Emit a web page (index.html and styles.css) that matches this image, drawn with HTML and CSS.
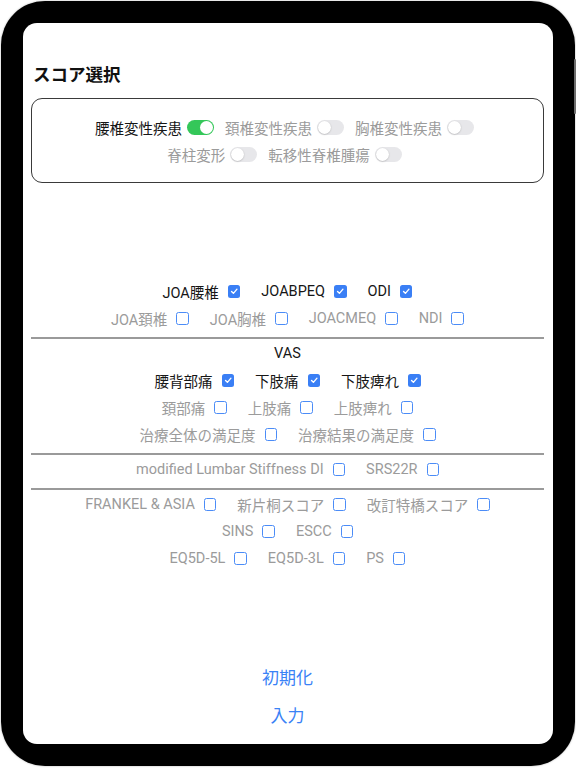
FILE: index.html
```html
<!DOCTYPE html>
<html lang="ja">
<head>
<meta charset="utf-8">
<title>スコア選択</title>
<link rel="stylesheet" href="styles.css">
</head>
<body>
<div class="device">
  <div class="side-button"></div>
  <div class="screen">
    <h1 class="title">スコア選択</h1>
    <div class="disease-box">
      <div class="row">
        <div class="item on"><span class="label">腰椎変性疾患</span><span class="toggle on"><span class="knob"></span></span></div>
        <div class="item off"><span class="label">頚椎変性疾患</span><span class="toggle"><span class="knob"></span></span></div>
        <div class="item off"><span class="label">胸椎変性疾患</span><span class="toggle"><span class="knob"></span></span></div>
      </div>
      <div class="row">
        <div class="item off"><span class="label">脊柱変形</span><span class="toggle"><span class="knob"></span></span></div>
        <div class="item off"><span class="label">転移性脊椎腫瘍</span><span class="toggle"><span class="knob"></span></span></div>
      </div>
    </div>

    <div class="scores">
      <div class="row cb-row">
        <div class="item on"><span class="label">JOA腰椎</span><span class="cb checked"><svg viewBox="0 0 12 12"><path d="M3.4 6.2 L5.2 8 L8.6 4"/></svg></span></div>
        <div class="item on"><span class="label">JOABPEQ</span><span class="cb checked"><svg viewBox="0 0 12 12"><path d="M3.4 6.2 L5.2 8 L8.6 4"/></svg></span></div>
        <div class="item on"><span class="label">ODI</span><span class="cb checked"><svg viewBox="0 0 12 12"><path d="M3.4 6.2 L5.2 8 L8.6 4"/></svg></span></div>
      </div>
      <div class="row cb-row">
        <div class="item off"><span class="label">JOA頚椎</span><span class="cb"></span></div>
        <div class="item off"><span class="label">JOA胸椎</span><span class="cb"></span></div>
        <div class="item off"><span class="label">JOACMEQ</span><span class="cb"></span></div>
        <div class="item off"><span class="label">NDI</span><span class="cb"></span></div>
      </div>
      <hr class="sep">
      <div class="row cb-row"><span class="group-title">VAS</span></div>
      <div class="row cb-row">
        <div class="item on"><span class="label">腰背部痛</span><span class="cb checked"><svg viewBox="0 0 12 12"><path d="M3.4 6.2 L5.2 8 L8.6 4"/></svg></span></div>
        <div class="item on"><span class="label">下肢痛</span><span class="cb checked"><svg viewBox="0 0 12 12"><path d="M3.4 6.2 L5.2 8 L8.6 4"/></svg></span></div>
        <div class="item on"><span class="label">下肢痺れ</span><span class="cb checked"><svg viewBox="0 0 12 12"><path d="M3.4 6.2 L5.2 8 L8.6 4"/></svg></span></div>
      </div>
      <div class="row cb-row">
        <div class="item off"><span class="label">頚部痛</span><span class="cb"></span></div>
        <div class="item off"><span class="label">上肢痛</span><span class="cb"></span></div>
        <div class="item off"><span class="label">上肢痺れ</span><span class="cb"></span></div>
      </div>
      <div class="row cb-row">
        <div class="item off"><span class="label">治療全体の満足度</span><span class="cb"></span></div>
        <div class="item off"><span class="label">治療結果の満足度</span><span class="cb"></span></div>
      </div>
      <hr class="sep">
      <div class="row cb-row">
        <div class="item off"><span class="label">modified Lumbar Stiffness DI</span><span class="cb"></span></div>
        <div class="item off"><span class="label">SRS22R</span><span class="cb"></span></div>
      </div>
      <hr class="sep">
      <div class="row cb-row">
        <div class="item off"><span class="label">FRANKEL &amp; ASIA</span><span class="cb"></span></div>
        <div class="item off"><span class="label">新片桐スコア</span><span class="cb"></span></div>
        <div class="item off"><span class="label">改訂特橋スコア</span><span class="cb"></span></div>
      </div>
      <div class="row cb-row">
        <div class="item off"><span class="label">SINS</span><span class="cb"></span></div>
        <div class="item off"><span class="label">ESCC</span><span class="cb"></span></div>
      </div>
      <div class="row cb-row">
        <div class="item off"><span class="label">EQ5D-5L</span><span class="cb"></span></div>
        <div class="item off"><span class="label">EQ5D-3L</span><span class="cb"></span></div>
        <div class="item off"><span class="label">PS</span><span class="cb"></span></div>
      </div>
    </div>

    <div class="actions">
      <button class="action">初期化</button>
      <button class="action">入力</button>
    </div>
  </div>
</div>
</body>
</html>
```

FILE: styles.css
```css
html, body {
  margin: 0;
  padding: 0;
  background: #ffffff;
}

body {
  width: 576px;
  height: 768px;
  font-family: "Roboto", "Noto Sans CJK JP", sans-serif;
  overflow: hidden;
}

.device {
  position: relative;
  width: 574px;
  height: 765px;
  margin: 1px;
  box-sizing: border-box;
  padding: 22px;
  background: #000;
  border-radius: 44px;
  box-shadow: 0 0 2px rgba(0, 0, 0, 0.35);
}

.side-button {
  position: absolute;
  right: -1px;
  top: 58px;
  width: 2px;
  height: 55px;
  background: #6d6d6d;
  border-radius: 1px;
}

.screen {
  display: flex;
  flex-direction: column;
  height: 100%;
  box-sizing: border-box;
  padding: 0 9px 11px 8px;
  background: #fff;
  border-radius: 14px;
  overflow: hidden;
}

.title {
  margin: 40px 0 0 2px;
  height: 24px;
  line-height: 24px;
  font-size: 17.5px;
  font-weight: 600;
  color: #111;
}

.disease-box {
  margin-top: 11px;
  height: 85px;
  box-sizing: border-box;
  padding-top: 14.5px;
  border: 1.5px solid #3a3a3a;
  border-radius: 11px;
}

.row {
  display: flex;
  justify-content: center;
  align-items: center;
  height: 27px;
}

.disease-box .row {
  gap: 11px;
  padding-right: 6px;
}

.cb-row {
  gap: 21px;
}

.item {
  display: flex;
  align-items: center;
  font-size: 14.5px;
  white-space: nowrap;
}

.disease-box .item {
  gap: 5px;
}

.cb-row .item {
  gap: 9px;
}

.item.on .label {
  color: #161616;
}

.item.off .label {
  color: #9b9b9b;
}

.group-title {
  font-size: 14.5px;
  color: #161616;
}

.toggle {
  position: relative;
  display: inline-block;
  width: 27px;
  height: 15px;
  border-radius: 8px;
  background: #e7e7ea;
}

.toggle.on {
  background: #34c759;
}

.knob {
  position: absolute;
  top: 1px;
  left: 1px;
  width: 13px;
  height: 13px;
  border-radius: 50%;
  background: #fff;
  box-shadow: 0 0.5px 1.5px rgba(0, 0, 0, 0.25);
}

.toggle.on .knob {
  left: 13px;
  box-shadow: none;
}

.scores {
  margin-top: 95px;
}

.cb {
  display: inline-flex;
  width: 12.5px;
  height: 12.5px;
  box-sizing: border-box;
  border: 1.6px solid #4b8cf7;
  border-radius: 2.5px;
  background: #fff;
}

.cb.checked {
  border: none;
  background: #3a7ff5;
}

.cb svg {
  width: 100%;
  height: 100%;
}

.cb svg path {
  fill: none;
  stroke: #fff;
  stroke-width: 1.3;
  stroke-linecap: round;
  stroke-linejoin: round;
}

.sep {
  margin: 5px 0 1px;
  height: 2px;
  border: none;
  background: #9a9a9a;
}

.actions {
  margin-top: auto;
  display: flex;
  flex-direction: column;
}

.action {
  height: 38px;
  padding: 0;
  border: none;
  background: none;
  font-family: "Roboto", "Noto Sans CJK JP", sans-serif;
  font-size: 17px;
  color: #3a82f6;
}
```
